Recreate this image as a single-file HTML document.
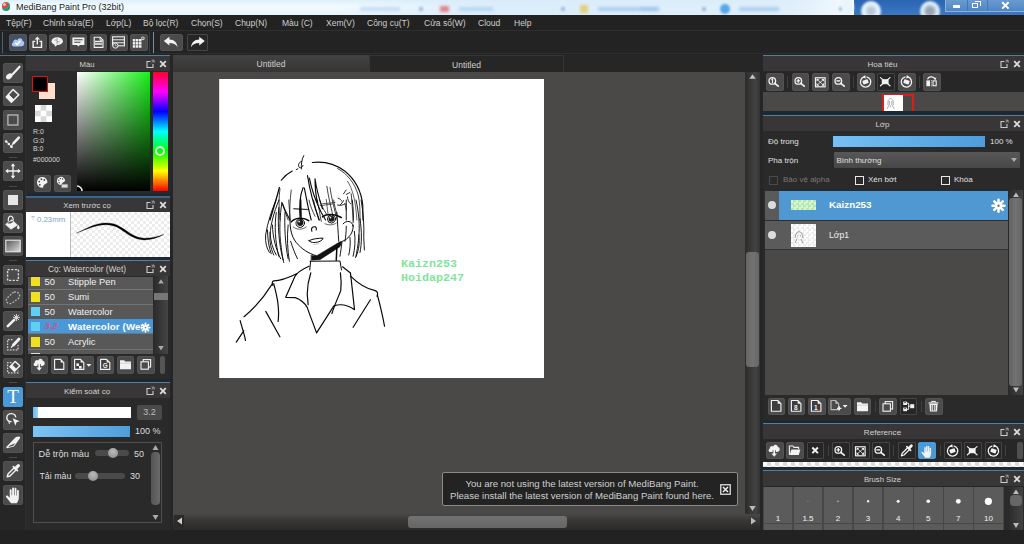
<!DOCTYPE html>
<html><head><meta charset="utf-8"><title>MediBang Paint Pro (32bit)</title>
<style>
*{box-sizing:border-box;margin:0;padding:0}
html,body{width:1024px;height:544px;overflow:hidden;background:#222222;font-family:"Liberation Sans","DejaVu Sans",sans-serif;font-size:9px;color:#d0d0d0}
body{position:relative}
.a{position:absolute}
.t{position:absolute;white-space:nowrap;line-height:12px}
#titlebar{left:0;top:0;width:1024px;height:14.6px;background:linear-gradient(#dff0fb,#f3fbff 45%,#e6f4fc);overflow:hidden}
#menubar{left:0;top:14.6px;width:1024px;height:16.4px;background:#222222;border-bottom:1px solid #2f2f2f}
#menubar span{position:absolute;top:2.6px;font-size:8.5px;line-height:12px;color:#cfcfcf;white-space:nowrap}
.btn{position:absolute;background:#4b4b4b;border:1px solid #535353;border-radius:2px}
.btnd{position:absolute;background:#262626;border:1px solid #454545;border-radius:1px}
.btn svg,.btnd svg,.btns svg{position:absolute;left:-1px;top:-1px}
.btns{position:absolute;background:#4a9ad8;border:1px solid #4a9ad8;border-radius:2px}
.pt{position:absolute;height:16px;background:#383636;border-top:1px solid #54809e;color:#d4d4d4;font-size:8px;line-height:17px;text-align:center;white-space:nowrap;padding-right:22px}
.pbg{position:absolute;background:#2a2a2a}
.sep{position:absolute;width:1px;background:#404040}
.chk{background-color:#fff;background-image:conic-gradient(#ececec 25%,transparent 0 50%,#ececec 0 75%,transparent 0);background-size:4px 4px}
</style></head><body>
<div id="titlebar" class="a">
<div class="a" style="left:330px;top:0;width:524px;height:15px;background:linear-gradient(to right,rgba(216,235,250,0),rgba(216,235,250,.85) 30%,rgba(220,237,250,.85) 88%,rgba(244,250,254,1))"></div>
<div class="a" style="left:360px;top:7px;width:40px;height:4px;background:#9cbfe6;filter:blur(1.4px);opacity:0.45"></div>
<div class="a" style="left:459px;top:7px;width:34px;height:4px;background:#9cc4ec;filter:blur(1.4px);opacity:0.55"></div>
<div class="a" style="left:598px;top:7px;width:60px;height:4px;background:#8fb8e8;filter:blur(1.4px);opacity:0.6"></div>
<div class="a" style="left:739px;top:7px;width:40px;height:4px;background:#8fb8e8;filter:blur(1.4px);opacity:0.6"></div>
<div class="a" style="left:640px;top:7px;width:20px;height:4px;background:#9cbfe6;filter:blur(1.4px);opacity:0.4"></div>
<div class="a" style="left:440px;top:6px;width:9px;height:6px;background:#e05a5a;filter:blur(1.6px);opacity:.7"></div>
<div class="a" style="left:580px;top:5px;width:8px;height:8px;background:#e8c860;filter:blur(1.6px);opacity:.8"></div>
<div class="a" style="left:720px;top:4px;width:10px;height:10px;border-radius:5px;background:#3f9be8;filter:blur(1.3px);opacity:.85"></div>
<div class="a" style="left:419px;top:7px;width:4px;height:4px;background:#7f9fc8;filter:blur(1.2px);opacity:.6"></div>
<div class="a" style="left:561px;top:7px;width:4px;height:4px;background:#7f9fc8;filter:blur(1.2px);opacity:.6"></div>
<div class="a" style="left:702px;top:7px;width:4px;height:4px;background:#7f9fc8;filter:blur(1.2px);opacity:.6"></div>
<div class="a" style="left:839px;top:7px;width:4px;height:4px;background:#7f9fc8;filter:blur(1.2px);opacity:.6"></div>
<div class="a" style="left:853.5px;top:0;width:171px;height:15px;background:linear-gradient(#2a64b2,#3b78c2)"></div>
<div class="a" style="left:945px;top:0;width:79px;height:11.5px;background:linear-gradient(#6c9ad0,#4f86c6);border-left:1px solid #8fb4dc;border-bottom:1px solid #8fb4dc"></div>
<div class="a" style="left:966.5px;top:0;width:1px;height:11px;background:#4477b6"></div><div class="a" style="left:987px;top:0;width:1px;height:11px;background:#4477b6"></div>
<div class="a" style="left:860.5px;top:0.5px;width:20px;height:20px;border-radius:10px;background:radial-gradient(circle,#b8c8d8 0 22%,#e4f2fb 45%);filter:blur(1.2px)"></div>
<div class="a" style="left:920px;top:0.5px;width:20px;height:20px;border-radius:10px;background:radial-gradient(circle,#98a4b0 0 25%,#dcecf8 50%);filter:blur(1.2px)"></div>
<div class="a" style="left:842px;top:-3px;width:12px;height:20px;border-radius:0 10px 10px 0;background:#e8f5fc;filter:blur(1px)"></div>
<div class="a" style="left:952.5px;top:5px;width:7.5px;height:2.6px;background:#fff;border-radius:0.5px"></div>
<div class="a" style="left:972px;top:2.5px;width:6px;height:5.5px;border:1.4px solid #fff"></div><div class="a" style="left:974.5px;top:0.8px;width:6px;height:5.5px;border:1.4px solid #fff;border-left:none;border-bottom:none"></div>
<svg class="a" style="left:1000.5px;top:0.5px" width="9" height="9"><path d="M1.2 1.2 L7.6 7.6 M7.6 1.2 L1.2 7.6" stroke="#fff" stroke-width="2"/></svg>
<div class="a" style="left:1.6px;top:2.2px;width:8.4px;height:8.4px;border-radius:5px;background:radial-gradient(circle at 30% 28%,#f0c8b8 0 12%,#e04848 22% 38%,#2aa47a 52%,#1c7c58 100%)"></div>
<div class="t" style="left:16px;top:1px;font-size:9px;color:#1a1a1a;text-shadow:0 0 2px #fff">MediBang Paint Pro (32bit)</div>
</div>
<div id="menubar" class="a">
<span style="left:6px">Tệp(F)</span>
<span style="left:43px">Chỉnh sửa(E)</span>
<span style="left:106px">Lớp(L)</span>
<span style="left:143px">Bộ lọc(R)</span>
<span style="left:191px">Chọn(S)</span>
<span style="left:235px">Chụp(N)</span>
<span style="left:282px">Màu (C)</span>
<span style="left:326px">Xem(V)</span>
<span style="left:367px">Công cụ(T)</span>
<span style="left:424px">Cửa sổ(W)</span>
<span style="left:478px">Cloud</span>
<span style="left:514px">Help</span>
</div>
<div class="a" style="left:0;top:31px;width:1024px;height:24px;background:#232323"></div>
<div class="a" style="left:0;top:53px;width:1024px;height:1px;background:#2e2e2e"></div>
<div class="a" style="left:2px;top:32px;width:1px;height:21px;background:#44607a"></div>
<div class="a" style="left:149px;top:32px;width:1px;height:21px;background:#3a3a3a"></div>
<div class="a" style="left:153px;top:32px;width:1px;height:21px;background:#7890a4"></div>
<div class="btn" style="left:9px;top:34px;width:17.5px;height:17px;background:#47505e;border-color:#4f5866"><svg width="17" height="17" viewBox="0 0 17 17"><path d="M5 12.4C2.4 12.4 2 9 4.2 8.4C4 5.8 7 4.6 8.4 6.2C9.4 3.4 13.6 3.8 13.6 7C15.8 7.2 15.8 11 13.8 12C12 12.6 7 12.4 5 12.4Z" fill="#a9c9f2"/><path d="M6.2 8.8L8 10.6L11.4 6.8" fill="none" stroke="#fff" stroke-width="1.5"/></svg></div>
<div class="btn" style="left:29px;top:34px;width:17.5px;height:17px"><svg width="17" height="17" viewBox="0 0 17 17"><path d="M6.2 7.4H4.1V13.4H12.5V7.4H10.4" fill="none" stroke="#f2f2f2" stroke-width="1.4"/><path d="M8.3 4.4V10.6" stroke="#f2f2f2" stroke-width="1.4"/><path d="M5.6 5.6L8.3 2.4L11 5.6Z" fill="#f2f2f2"/></svg></div>
<div class="btn" style="left:49px;top:34px;width:17.5px;height:17px"><svg width="17" height="17" viewBox="0 0 17 17"><ellipse cx="8.2" cy="7.2" rx="5.7" ry="3.9" fill="#f2f2f2"/><path d="M5.4 9.8L6 12.8L8.8 10.6Z" fill="#f2f2f2"/><path d="M8 4V10M5.2 6.2C6.4 5.6 7 6.4 8 6M8 7.8C9 7.4 10 8.2 11 7.6" fill="none" stroke="#777" stroke-width="0.6"/></svg></div>
<div class="btn" style="left:69.5px;top:34px;width:17.5px;height:17px"><svg width="17" height="17" viewBox="0 0 17 17"><path d="M2.4 3.4H14.4V11H9.8L8.4 12.6L7 11H2.4Z" fill="#f2f2f2"/><path d="M4.2 5.8H12.6M4.2 8.2H10.4" stroke="#444" stroke-width="1.1"/></svg></div>
<div class="btn" style="left:89.5px;top:34px;width:17.5px;height:17px"><svg width="17" height="17" viewBox="0 0 17 17"><path d="M4.2 3.2H10L13 6.2V13.4H4.2Z" fill="#484848" stroke="#f2f2f2" stroke-width="1.1" stroke-linejoin="round"/><path d="M10 3.2V6.2H13" fill="none" stroke="#f2f2f2" stroke-width="0.9"/><path d="M5 7.4H12.2M5 10H12.2" stroke="#f2f2f2" stroke-width="1.5"/></svg></div>
<div class="btn" style="left:110px;top:34px;width:17.5px;height:17px"><svg width="17" height="17" viewBox="0 0 17 17"><rect x="2.6" y="2.8" width="11.8" height="9" fill="none" stroke="#f2f2f2" stroke-width="1.1"/><path d="M2.6 5.8H14.4M2.6 8.8H14.4" stroke="#f2f2f2" stroke-width="1"/><circle cx="5.4" cy="11.6" r="2.6" fill="#4b4b4b" stroke="#f2f2f2" stroke-width="1"/><path d="M5.4 10.2V11.8H6.6" fill="none" stroke="#f2f2f2" stroke-width="0.8"/></svg></div>
<div class="btn" style="left:130px;top:34px;width:17.5px;height:17px"><svg width="17" height="17" viewBox="0 0 17 17"><rect x="2.8" y="5.0" width="2.5" height="2.5" fill="#f2f2f2"/><rect x="5.9" y="5.0" width="2.5" height="2.5" fill="#f2f2f2"/><rect x="9.0" y="5.0" width="2.5" height="2.5" fill="#f2f2f2"/><rect x="2.8" y="8.1" width="2.5" height="2.5" fill="#f2f2f2"/><rect x="5.9" y="8.1" width="2.5" height="2.5" fill="#f2f2f2"/><rect x="9.0" y="8.1" width="2.5" height="2.5" fill="#f2f2f2"/><rect x="2.8" y="11.2" width="2.5" height="2.5" fill="#f2f2f2"/><rect x="5.9" y="11.2" width="2.5" height="2.5" fill="#f2f2f2"/><rect x="9.0" y="11.2" width="2.5" height="2.5" fill="#f2f2f2"/><circle cx="12.9" cy="4.3" r="1.3" fill="none" stroke="#ccc" stroke-width="1.1"/></svg></div>
<div class="btn" style="left:160px;top:34px;width:23px;height:17px"><svg width="23" height="17" viewBox="0 0 23 17"><path d="M3.8 7L9.4 2.8V5.4C14.2 5.4 17.2 8.6 17.6 13.2C16 10.4 13.2 9 9.4 9V11.4Z" fill="#f2f2f2"/></svg></div>
<div class="btnd" style="left:187px;top:34px;width:21px;height:17px"><svg width="21" height="17" viewBox="0 0 21 17"><g transform="translate(21 0) scale(-1 1)"><path d="M3.2 7L8.8 2.8V5.4C13.6 5.4 16.6 8.6 17 13.2C15.4 10.4 12.6 9 8.8 9V11.4Z" fill="#f2f2f2"/></g></svg></div>
<div class="a" style="left:0;top:55px;width:26px;height:475px;background:#262626;border-top:1px solid #5a6f80;border-right:1px solid #2f2f2f"></div>
<div class="btn" style="left:3px;top:63px;width:20px;height:20px"><svg width="20" height="20" viewBox="0 0 20 20"><path d="M16.6 3.7L9.6 11.2" stroke="#f2f2f2" stroke-width="2.1" stroke-linecap="round"/><ellipse cx="6.2" cy="13.3" rx="3.6" ry="2.5" transform="rotate(-38 6.3 13.2)" fill="#f2f2f2"/></svg></div>
<div class="btn" style="left:3px;top:86px;width:20px;height:20px"><svg width="20" height="20" viewBox="0 0 20 20"><path d="M10.1 3.6L15.8 8.8L8.4 16.2L3.2 11Z" fill="none" stroke="#f2f2f2" stroke-width="1.5" stroke-linejoin="round"/><path d="M3.2 11L5.6 8.6L10.8 13.8L8.4 16.2Z" fill="#f2f2f2" stroke="#f2f2f2" stroke-width="1" stroke-linejoin="round"/></svg></div>
<div class="btn" style="left:3px;top:109.5px;width:20px;height:20px"><svg width="20" height="20" viewBox="0 0 20 20"><rect x="4.9" y="5" width="10" height="10" fill="none" stroke="#c8c8c8" stroke-width="1.15"/></svg></div>
<div class="btn" style="left:3px;top:133px;width:20px;height:20px"><svg width="20" height="20" viewBox="0 0 20 20"><path d="M3.2 8.4L5.8 11L8.4 13.6" stroke="#f2f2f2" stroke-width="0.9" fill="none"/><circle cx="3.2" cy="8.4" r="1.25" fill="#f2f2f2"/><circle cx="5.8" cy="11" r="1.25" fill="#f2f2f2"/><circle cx="8.5" cy="13.7" r="1.4" fill="#f2f2f2"/><path d="M15.8 4.6L10.6 10.2" stroke="#f2f2f2" stroke-width="2.5" stroke-linecap="round"/><path d="M9.8 11L9.2 11.7" stroke="#f2f2f2" stroke-width="1.2" stroke-linecap="round"/></svg></div>
<div class="btn" style="left:3px;top:161px;width:20px;height:20px"><svg width="20" height="20" viewBox="0 0 20 20"><path d="M10 3.8V16.2M3.8 10H16.2" stroke="#f2f2f2" stroke-width="1.3"/><path d="M10 2.2L12.2 5.2H7.8ZM10 17.8L12.2 14.8H7.8ZM2.2 10L5.2 7.8V12.2ZM17.8 10L14.8 7.8V12.2Z" fill="#f2f2f2"/></svg></div>
<div class="btn" style="left:3px;top:190px;width:20px;height:20px"><svg width="20" height="20" viewBox="0 0 20 20"><rect x="5" y="5" width="10" height="10" fill="#e6e6e6"/></svg></div>
<div class="btn" style="left:3px;top:213px;width:20px;height:20px"><svg width="20" height="20" viewBox="0 0 20 20"><path d="M2.6 11.4L8.8 6.8L14.4 12L8 16.2Z" fill="#f2f2f2" stroke="#f2f2f2" stroke-width="0.8" stroke-linejoin="round"/><path d="M4.6 10.4C6 8.6 8 7.8 10.4 8.4C9 10 6.8 10.8 4.6 10.4Z" fill="#4b4b4b"/><path d="M5.4 8.4C4.8 5.6 5.8 3.2 7.6 3.2C9.4 3.2 10.4 5 10.2 7.6" fill="none" stroke="#f2f2f2" stroke-width="1.2"/><path d="M15.2 11.8C16 13 16.6 14 16.6 14.8C16.6 15.6 16 16.2 15.3 16.2C14.6 16.2 14 15.6 14 14.8C14 14 14.6 13 15.2 11.8Z" fill="#f2f2f2"/></svg></div>
<div class="btn" style="left:3px;top:236.2px;width:20px;height:20px"><svg width="20" height="20" viewBox="0 0 20 20"><defs><linearGradient id="gg" x1="0" y1="0" x2="1" y2="1"><stop offset="0" stop-color="#555"/><stop offset="1" stop-color="#ddd"/></linearGradient></defs><rect x="2.8" y="4.2" width="14.4" height="11.6" fill="url(#gg)" stroke="#e8e8e8" stroke-width="1.1"/></svg></div>
<div class="btn" style="left:3px;top:265px;width:20px;height:20px"><svg width="20" height="20" viewBox="0 0 20 20"><rect x="4.6" y="4.6" width="10.8" height="10.8" fill="none" stroke="#d8d8d8" stroke-width="1.4" stroke-dasharray="2.2 1.4"/></svg></div>
<div class="btn" style="left:3px;top:288px;width:20px;height:20px"><svg width="20" height="20" viewBox="0 0 20 20"><path d="M11 4.2C13.8 3.4 16.6 5.2 16.6 7.8C16.6 10.6 13.4 11.6 11.6 13.2C9.8 14.8 7 16.4 4.8 15C2.6 13.6 3 10.4 5 9.2C7 8 8.2 5 11 4.2Z" fill="none" stroke="#b8b8b8" stroke-width="1.3" stroke-dasharray="1.8 1.4"/></svg></div>
<div class="btn" style="left:3px;top:311px;width:20px;height:20px"><svg width="20" height="20" viewBox="0 0 20 20"><path d="M4.8 15.2L11.2 8.8" stroke="#f2f2f2" stroke-width="2.6" stroke-linecap="round"/><path d="M13.4 3V10M10 6.4H16.8M10.8 3.8L16 9M16 3.8L11.6 8.4" stroke="#e4e4e4" stroke-width="0.95"/></svg></div>
<div class="btn" style="left:3px;top:335px;width:20px;height:20px"><svg width="20" height="20" viewBox="0 0 20 20"><path d="M9.5 4.6H4.6V14.8H15V10" fill="none" stroke="#cfcfcf" stroke-width="1.3" stroke-dasharray="1.7 1.2"/><path d="M16 4L10.4 10" stroke="#f2f2f2" stroke-width="2.9" stroke-linecap="round"/><path d="M9.4 11L8.4 12.2" stroke="#f2f2f2" stroke-width="1.3" stroke-linecap="round"/></svg></div>
<div class="btn" style="left:3px;top:358px;width:20px;height:20px"><svg width="20" height="20" viewBox="0 0 20 20"><path d="M8.5 4.6H4.6V14.8H15V12.4" fill="none" stroke="#cfcfcf" stroke-width="1.3" stroke-dasharray="1.7 1.2"/><path d="M12.2 3.4L16.8 7.8L11.4 13.2L7 8.8Z" fill="#4b4b4b" stroke="#f2f2f2" stroke-width="1.4" stroke-linejoin="round"/><path d="M7 8.8L9 6.8L13.4 11.2L11.4 13.2Z" fill="#f2f2f2" stroke="#f2f2f2" stroke-width="0.8" stroke-linejoin="round"/></svg></div>
<div class="btns" style="left:3px;top:386.5px;width:20px;height:20px"><svg width="20" height="20" viewBox="0 0 20 20"><text x="10" y="16.4" text-anchor="middle" font-family="Liberation Serif,serif" font-size="19" fill="#fff">T</text></svg></div>
<div class="btn" style="left:3px;top:409.5px;width:20px;height:20px"><svg width="20" height="20" viewBox="0 0 20 20"><path d="M8.6 11.6C5.4 11.8 3.6 9.6 3.8 7.4C4 5 6.2 3.4 8.8 3.6C11.2 3.8 12.8 5.4 12.6 7.4" fill="none" stroke="#f2f2f2" stroke-width="1.4"/><path d="M6.4 11C5.6 12 5.8 13.2 7 13.4" fill="none" stroke="#f2f2f2" stroke-width="1.1"/><path d="M9.6 8.2L16.8 11.2L13.6 12.2L12.4 15.8Z" fill="#f2f2f2"/></svg></div>
<div class="btn" style="left:3px;top:433px;width:20px;height:20px"><svg width="20" height="20" viewBox="0 0 20 20"><path d="M15.6 3.6C16.8 3.2 17.6 4.4 16.8 5.6L11 13.4L4 15.2L3 14.2L12.4 4.6C13.4 3.8 14.6 3.8 15.6 3.6Z" fill="#f2f2f2"/><path d="M5.2 14.2L10.4 12.8L12.2 10.2L6.8 12.4Z" fill="#555"/></svg></div>
<div class="btn" style="left:3px;top:461px;width:20px;height:20px"><svg width="20" height="20" viewBox="0 0 20 20"><path d="M11.2 6.8L5 13L4.2 15.8L7 15L13.2 8.8" fill="none" stroke="#f2f2f2" stroke-width="1.4" stroke-linejoin="round"/><path d="M10.4 5.6L14.4 9.6" stroke="#f2f2f2" stroke-width="1.8" stroke-linecap="round"/><path d="M12.6 7.4L15.4 4.6" stroke="#f2f2f2" stroke-width="3.2" stroke-linecap="round"/></svg></div>
<div class="btn" style="left:3px;top:485px;width:20px;height:20px"><svg width="20" height="20" viewBox="0 0 20 20"><path d="M6.2 11V5.4C6.2 4.2 7.9 4.2 7.9 5.4V10H8.4V3.8C8.4 2.6 10.1 2.6 10.1 3.8V10H10.6V4.2C10.6 3 12.3 3 12.3 4.2V10.2H12.8V6.2C12.8 5 14.5 5 14.5 6.2V11.6C14.5 14.6 13.4 16 12.6 17.4H7.4C6 15.6 4.4 13.6 3 11.8C2.2 10.8 3.4 9.8 4.4 10.6L6.2 12.4Z" fill="#f2f2f2" transform="translate(-0.1,-0.8) scale(1.1)"/></svg></div>
<div class="a" style="left:9px;top:157px;width:8px;height:1px;background:#4a4a4a"></div>
<div class="a" style="left:9px;top:185.5px;width:8px;height:1px;background:#4a4a4a"></div>
<div class="a" style="left:9px;top:260px;width:8px;height:1px;background:#4a4a4a"></div>
<div class="a" style="left:9px;top:382px;width:8px;height:1px;background:#4a4a4a"></div>
<div class="a" style="left:9px;top:457px;width:8px;height:1px;background:#4a4a4a"></div>
<div class="pbg" style="left:26px;top:55px;width:144px;height:475px;background:#262626"></div>
<div class="pbg" style="left:26px;top:71px;width:144px;height:122px"></div>
<div class="pt" style="left:26px;top:55px;width:144px;font-size:7.7px">Màu<svg class="a" style="right:15px;top:3px" width="9" height="9" viewBox="0 0 9 9"><path d="M4.5 2.5H1v6h6V5" fill="none" stroke="#ccc" stroke-width="1.1"/><path d="M5.5 1.2h2.6v2.6M8 1.3L5.6 3.7" fill="none" stroke="#aaa" stroke-width="0.9"/></svg><svg class="a" style="right:3px;top:4px" width="8" height="8" viewBox="0 0 8 8"><path d="M1.2 1.2L6.8 6.8M6.8 1.2L1.2 6.8" stroke="#ddd" stroke-width="1.8"/></svg></div>
<div class="a" style="left:39px;top:83px;width:16px;height:16px;background:#fde0cc"></div>
<div class="a" style="left:32px;top:76px;width:16px;height:16px;background:#000;border:1.3px solid #e01010"></div>
<div class="a" style="left:35px;top:104.5px;width:17px;height:17px;background-color:#fff;background-image:conic-gradient(#d8d8d8 25%,#fff 0 50%,#d8d8d8 0 75%,#fff 0);background-size:11.34px 11.34px"></div>
<div class="t" style="left:33px;top:126px;font-size:6.9px;color:#d8d8d8">R:0</div>
<div class="t" style="left:33px;top:135px;font-size:6.9px;color:#d8d8d8">G:0</div>
<div class="t" style="left:33px;top:143px;font-size:6.9px;color:#d8d8d8">B:0</div>
<div class="t" style="left:33px;top:154px;font-size:6.9px;color:#d8d8d8">#000000</div>
<div class="btn" style="left:34px;top:175px;width:17px;height:17px"><svg width="17" height="17" viewBox="0 0 17 17"><path d="M13.5 7.4A5.3 5.3 0 1 0 9.26 12.594000000000001C8.729999999999999 10.05 11.114999999999998 9.255 13.5 7.4Z" fill="#f2f2f2"/><circle cx="5.28" cy="6.61" r="0.90" fill="#444"/><circle cx="7.40" cy="4.22" r="0.90" fill="#444"/><circle cx="10.32" cy="5.02" r="0.90" fill="#444"/><circle cx="5.81" cy="9.79" r="0.90" fill="#444"/></svg></div>
<div class="btn" style="left:54px;top:175px;width:17px;height:17px"><svg width="17" height="17" viewBox="0 0 17 17"><path d="M11.1 5.9A4.1 4.1 0 1 0 7.82 9.918C7.41 7.95 9.254999999999999 7.335 11.1 5.9Z" fill="#f2f2f2"/><circle cx="4.75" cy="5.29" r="0.70" fill="#444"/><circle cx="6.38" cy="3.44" r="0.70" fill="#444"/><circle cx="8.64" cy="4.06" r="0.70" fill="#444"/><circle cx="5.16" cy="7.75" r="0.70" fill="#444"/><rect x="7.6" y="9.2" width="6.2" height="3.6" fill="#ddd" stroke="#888" stroke-width="0.6"/></svg></div>
<div class="a" style="left:77px;top:72px;width:73px;height:119px;background:linear-gradient(to bottom,rgba(0,0,0,0),#000),linear-gradient(to right,#fff,#18f018)"></div>
<div class="a" style="left:153px;top:72px;width:15px;height:119px;background:linear-gradient(to bottom,#ff0030 0%,#ff00ff 16.7%,#0000ff 33.3%,#00ffff 50%,#00ff00 66.7%,#ffff00 83.3%,#ff0000 100%)"></div>
<div class="a" style="left:155.2px;top:146px;width:9.8px;height:9.8px;border-radius:5px;border:2.1px solid #dcf6dc"></div>
<svg class="a" style="left:77px;top:181px" width="10" height="10"><circle cx="0" cy="10" r="5" fill="none" stroke="#f0f0f0" stroke-width="1.6"/></svg>
<div class="a" style="left:26px;top:192.5px;width:144px;height:3.5px;background:#1e2832"></div>
<div class="pt" style="left:26px;top:196px;width:144px;font-size:7.8px">Xem trước cọ<svg class="a" style="right:15px;top:3px" width="9" height="9" viewBox="0 0 9 9"><path d="M4.5 2.5H1v6h6V5" fill="none" stroke="#ccc" stroke-width="1.1"/><path d="M5.5 1.2h2.6v2.6M8 1.3L5.6 3.7" fill="none" stroke="#aaa" stroke-width="0.9"/></svg><svg class="a" style="right:3px;top:4px" width="8" height="8" viewBox="0 0 8 8"><path d="M1.2 1.2L6.8 6.8M6.8 1.2L1.2 6.8" stroke="#ddd" stroke-width="1.8"/></svg></div>
<div class="a" style="left:26px;top:196px;width:144px;height:2px;background:#3d6485"></div>
<div class="a" style="left:26px;top:212px;width:144px;height:44.5px;background:#fff"></div>
<div class="a chk" style="left:71px;top:212px;width:99px;height:44.5px;background-size:6px 6px"></div>
<div class="a" style="left:70px;top:212px;width:1px;height:45px;background:#bbb"></div>
<div class="t" style="left:31px;top:212px;font-size:5px;color:#7ba5c4">〒</div>
<div class="t" style="left:37px;top:213px;font-size:7.8px;margin-top:0.8px;color:#7ba5c4">0.23mm</div>
<svg class="a" style="left:70px;top:212px" width="100" height="45"><path d="M6.4 21.2C16 16.6 26 11 35.7 11C45 11 50.5 14.6 56.1 18.6C62.5 23.2 68 26.2 74.4 26.2C81 26.2 88 24.6 93.7 22.4C88 25.6 81 27.9 74.4 27.9C67.5 27.9 61.5 24.9 55.1 20.3C49.5 16.4 45 12.7 35.7 12.7C26 12.7 16 17.4 6.4 21.2Z" fill="#000" stroke="#000" stroke-width="0.3"/></svg>
<div class="a" style="left:26px;top:256.5px;width:144px;height:3.5px;background:#1e2832"></div>
<div class="pt" style="left:26px;top:260px;width:144px;font-size:8.4px">Cọ: Watercolor (Wet)<svg class="a" style="right:15px;top:3px" width="9" height="9" viewBox="0 0 9 9"><path d="M4.5 2.5H1v6h6V5" fill="none" stroke="#ccc" stroke-width="1.1"/><path d="M5.5 1.2h2.6v2.6M8 1.3L5.6 3.7" fill="none" stroke="#aaa" stroke-width="0.9"/></svg><svg class="a" style="right:3px;top:4px" width="8" height="8" viewBox="0 0 8 8"><path d="M1.2 1.2L6.8 6.8M6.8 1.2L1.2 6.8" stroke="#ddd" stroke-width="1.8"/></svg></div>
<div class="pbg" style="left:26px;top:276px;width:144px;height:104px"></div>
<div class="a" style="left:28px;top:276.5px;width:125px;height:77.5px;background:#585858;overflow:hidden">
<div class="a" style="left:0;top:12.0px;width:125px;height:1px;background:#747474"></div>
<div class="a" style="left:2.5px;top:0.45px;width:9.5px;height:9.3px;background:#f0e020"></div>
<div class="t" style="left:16.5px;top:-1.0px;font-size:9.3px;color:#f0f0f0">50</div>
<div class="t" style="left:40px;top:-1.0px;font-size:9.3px;color:#f0f0f0">Stipple Pen</div>
<div class="a" style="left:0;top:27.3px;width:125px;height:1px;background:#747474"></div>
<div class="a" style="left:2.5px;top:15.75px;width:9.5px;height:9.3px;background:#f0e020"></div>
<div class="t" style="left:16.5px;top:14.3px;font-size:9.3px;color:#f0f0f0">50</div>
<div class="t" style="left:40px;top:14.3px;font-size:9.3px;color:#f0f0f0">Sumi</div>
<div class="a" style="left:0;top:42.1px;width:125px;height:1px;background:#747474"></div>
<div class="a" style="left:2.5px;top:30.55px;width:9.5px;height:9.3px;background:#5fd0f4"></div>
<div class="t" style="left:16.5px;top:29.1px;font-size:9.3px;color:#f0f0f0">50</div>
<div class="t" style="left:40px;top:29.1px;font-size:9.3px;color:#f0f0f0">Watercolor</div>
<div class="a" style="left:0;top:42.6px;width:125px;height:14.8px;background:#4a98d8"></div>
<div class="a" style="left:0;top:56.9px;width:125px;height:1px;background:#747474"></div>
<div class="a" style="left:2.5px;top:45.35px;width:9.5px;height:9.3px;background:#5fd0f4"></div>
<div class="t" style="left:16.5px;top:43.9px;font-size:9.4px;font-weight:bold;font-style:italic;color:#d6507e">3.2</div>
<div class="t" style="left:40px;top:44.0px;font-size:9.7px;letter-spacing:0.15px;font-weight:bold;color:#fff;width:74px;overflow:hidden">Watercolor (Wet)</div>
<div class="a" style="left:0;top:72.5px;width:125px;height:1px;background:#747474"></div>
<div class="a" style="left:2.5px;top:60.95px;width:9.5px;height:9.3px;background:#f0e020"></div>
<div class="t" style="left:16.5px;top:59.5px;font-size:9.3px;color:#f0f0f0">50</div>
<div class="t" style="left:40px;top:59.5px;font-size:9.3px;color:#f0f0f0">Acrylic</div>
<div class="a" style="left:2.5px;top:76.3px;width:9.5px;height:1.7px;background:#e0e0e0"></div>
<svg class="a" style="left:110.2px;top:43px" width="15" height="15"><path d="M7.50 7.60L11.70 7.60" stroke="#fff" stroke-width="1.76" stroke-linecap="round"/><path d="M7.50 7.60L10.47 10.57" stroke="#fff" stroke-width="1.76" stroke-linecap="round"/><path d="M7.50 7.60L7.50 11.80" stroke="#fff" stroke-width="1.76" stroke-linecap="round"/><path d="M7.50 7.60L4.53 10.57" stroke="#fff" stroke-width="1.76" stroke-linecap="round"/><path d="M7.50 7.60L3.30 7.60" stroke="#fff" stroke-width="1.76" stroke-linecap="round"/><path d="M7.50 7.60L4.53 4.63" stroke="#fff" stroke-width="1.76" stroke-linecap="round"/><path d="M7.50 7.60L7.50 3.40" stroke="#fff" stroke-width="1.76" stroke-linecap="round"/><path d="M7.50 7.60L10.47 4.63" stroke="#fff" stroke-width="1.76" stroke-linecap="round"/><circle cx="7.5" cy="7.6" r="2.60" fill="#fff"/><circle cx="7.5" cy="7.6" r="0.84" fill="#4a98d8"/></svg>
</div>
<div class="a" style="left:154px;top:276px;width:14px;height:78px;background:linear-gradient(to right,#2c2c2c,#444)"></div>
<div class="a" style="left:154px;top:293px;width:14px;height:7px;background:#777"></div>
<svg class="a" style="left:154px;top:276px" width="14" height="78"><path d="M4.2 7.6h5.6l-2.8-4.4z" fill="#a8a8a8"/><path d="M4.2 70h5.6l-2.8 4.6z" fill="#a8a8a8"/></svg>
<div class="btn" style="left:31px;top:356px;width:17px;height:18px"><svg width="17" height="17" viewBox="0 0 17 17"><path d="M4.4 10C2.4 10 2 7.2 3.8 6.4C3.6 4.2 6 3.2 7.2 4.4C8 2 11.6 2.2 11.8 5C14 4.8 14.4 8.4 12.6 9.6C11 10.4 6 10 4.4 10Z" fill="#f2f2f2"/><path d="M8.2 8.2V12.4" stroke="#4b4b4b" stroke-width="3.2"/><path d="M8.2 8V12.4" stroke="#f2f2f2" stroke-width="1.7"/><path d="M5.4 11.6H11L8.2 14.8Z" fill="#f2f2f2"/></svg></div>
<div class="btn" style="left:51px;top:356px;width:17px;height:18px"><svg width="17" height="17" viewBox="0 0 17 17"><path d="M3.6 3.4H9.600000000000001L12.8 6.6V13.4H3.6Z" fill="#3e3e3e" stroke="#f2f2f2" stroke-width="1.15" stroke-linejoin="round"/><path d="M9.600000000000001 3.4V6.6H12.8Z" fill="#f2f2f2"/></svg></div>
<div class="btn" style="left:71px;top:356px;width:23px;height:18px"><svg width="23" height="17" viewBox="0 0 23 17"><path d="M3.6 3.4H9.600000000000001L12.8 6.6V13.4H3.6Z" fill="#3e3e3e" stroke="#f2f2f2" stroke-width="1.15" stroke-linejoin="round"/><path d="M9.600000000000001 3.4V6.6H12.8Z" fill="#f2f2f2"/><rect x="5.4" y="7.4" width="2.6" height="2.6" fill="#f2f2f2"/><rect x="8" y="10" width="2.6" height="2.6" fill="#f2f2f2"/><path d="M15.4 8H20.4L17.9 10.8Z" fill="#f2f2f2"/></svg></div>
<div class="btn" style="left:97px;top:356px;width:17px;height:18px"><svg width="17" height="17" viewBox="0 0 17 17"><path d="M3.6 3.4H9.600000000000001L12.8 6.6V13.4H3.6Z" fill="#3e3e3e" stroke="#f2f2f2" stroke-width="1.15" stroke-linejoin="round"/><path d="M9.600000000000001 3.4V6.6H12.8Z" fill="#f2f2f2"/><text x="8.2" y="12.4" text-anchor="middle" font-family="Liberation Sans,sans-serif" font-size="6.3" font-weight="bold" fill="#f2f2f2">G</text></svg></div>
<div class="btn" style="left:117px;top:356px;width:17px;height:18px"><svg width="17" height="17" viewBox="0 0 17 17"><path d="M3 4.2H7.2L8.2 5.6H14V13.2H3Z" fill="#f2f2f2"/><path d="M3 7.2H14" stroke="#bbb" stroke-width="0.6"/></svg></div>
<div class="btn" style="left:137px;top:356px;width:17.5px;height:18px"><svg width="17" height="17" viewBox="0 0 17 17"><rect x="6.2" y="3.6" width="7.4" height="7.4" fill="none" stroke="#f2f2f2" stroke-width="1.1"/><rect x="4" y="5.8" width="7.4" height="7.4" fill="#4b4b4b" stroke="#f2f2f2" stroke-width="1.1"/></svg></div>
<div class="a" style="left:160px;top:356px;width:5px;height:18px;background:#555;border-radius:2px"></div>
<div class="a" style="left:26px;top:378.5px;width:144px;height:3.5px;background:#1e2832"></div>
<div class="pt" style="left:26px;top:382px;width:144px;font-size:8px">Kiểm soát cọ<svg class="a" style="right:15px;top:3px" width="9" height="9" viewBox="0 0 9 9"><path d="M4.5 2.5H1v6h6V5" fill="none" stroke="#ccc" stroke-width="1.1"/><path d="M5.5 1.2h2.6v2.6M8 1.3L5.6 3.7" fill="none" stroke="#aaa" stroke-width="0.9"/></svg><svg class="a" style="right:3px;top:4px" width="8" height="8" viewBox="0 0 8 8"><path d="M1.2 1.2L6.8 6.8M6.8 1.2L1.2 6.8" stroke="#ddd" stroke-width="1.8"/></svg></div>
<div class="pbg" style="left:26px;top:398px;width:144px;height:132px"></div>
<div class="a" style="left:33px;top:407px;width:98px;height:11px;background:#fff"></div>
<div class="a" style="left:33px;top:407px;width:4.5px;height:11px;background:linear-gradient(to right,#6cb8ee,#9cd0f4)"></div>
<div class="a" style="left:137px;top:405px;width:25px;height:15px;background:#4a4a4a;border-radius:2px;color:#bbb;text-align:center;line-height:15px;font-size:9px">3.2</div>
<div class="a" style="left:33px;top:426px;width:97px;height:11px;background:linear-gradient(to right,#7cc4f4,#4e9edc)"></div>
<div class="t" style="left:135px;top:425px;font-size:9px;color:#ddd">100 %</div>
<div class="a" style="left:33px;top:442px;width:129px;height:81px;border:1px solid #505050"></div>
<div class="t" style="left:38.5px;top:447.5px;font-size:9.2px;color:#ddd">Dễ trộn màu</div>
<div class="a" style="left:95px;top:450px;width:34px;height:6px;border-radius:3px;background:#4a4a4a"></div>
<div class="a" style="left:107.5px;top:448px;width:10px;height:10px;border-radius:5px;background:radial-gradient(circle at 50% 35%,#bbb,#888)"></div>
<div class="t" style="left:134px;top:447.5px;font-size:9px;color:#ddd">50</div>
<div class="t" style="left:39.5px;top:470px;font-size:8.8px;color:#ddd">Tải màu</div>
<div class="a" style="left:75px;top:473px;width:50px;height:6px;border-radius:3px;background:#4a4a4a"></div>
<div class="a" style="left:88px;top:471px;width:10px;height:10px;border-radius:5px;background:radial-gradient(circle at 50% 35%,#bbb,#888)"></div>
<div class="t" style="left:130px;top:470px;font-size:9px;color:#ddd">30</div>
<div class="a" style="left:150px;top:443px;width:11px;height:79px;background:#2a2a2a"></div>
<div class="a" style="left:151px;top:452px;width:9px;height:53px;border-radius:4px;background:linear-gradient(to right,#555,#6a6a6a)"></div>
<svg class="a" style="left:150px;top:443px" width="11" height="79"><path d="M2.5 7h6l-3-5z" fill="#aaa"/><path d="M2.5 72h6l-3 5z" fill="#aaa"/></svg>
<div class="a" style="left:170px;top:55px;width:593px;height:475px;background:#262626"></div>
<div class="a" style="left:173px;top:55px;width:587px;height:17px;background:#262626"></div>
<div class="a" style="left:173px;top:55px;width:196px;height:17px;background:linear-gradient(#434242,#363535);color:#d0d0d0;font-size:8.5px;line-height:18.5px;text-align:center">Untitled</div>
<div class="a" style="left:369px;top:55px;width:195px;height:17px;background:#262626;border:1px solid #363636;border-bottom:none;color:#d0d0d0;font-size:8.5px;line-height:18px;text-align:center">Untitled</div>
<div class="a" style="left:173px;top:72px;width:572px;height:442px;background:#4b4948;overflow:hidden">
<div class="a" style="left:46px;top:7px;width:325px;height:299px;background:#fff;border-left:1px solid #ddd"></div>
<svg class="a" style="left:0;top:0" width="572" height="442" viewBox="0 0 572 442"><defs><clipPath id="ca"><rect x="0" y="0" width="572" height="150"/></clipPath></defs><g clip-path="url(#ca)"><g transform="translate(87,78) scale(0.12500)">
<g fill="none" stroke="#0a0a0a" stroke-width="9" stroke-linecap="round" stroke-linejoin="round">
<path d="M350 45 C336 70 328 110 331 152 M334 92 C314 92 302 118 312 136 C320 148 338 142 344 124 M303 150 L290 157" stroke-width="7.5"/>
<path d="M170 242 C195 210 225 185 258 168"/>
<path d="M418 100 C500 90 600 110 680 170 C760 235 810 330 822 440 L824 560"/>
<path d="M620 148 C700 190 760 270 785 360 C800 420 800 480 800 560" stroke-width="6"/>
<path d="M700 250 C740 310 765 400 775 560" stroke-width="5"/>
<path d="M155 300 C135 380 110 460 80 560" stroke-width="10"/>
<path d="M160 310 C150 380 150 460 160 560 M175 420 L225 560 M250 320 C240 400 235 470 240 560" stroke-width="6"/>
<path d="M345 300 C320 360 310 440 322 560 M355 305 C370 380 385 470 410 560"/>
<path d="M380 205 C395 300 420 420 475 560 M395 225 C410 300 440 400 490 500 L525 560 M440 230 C450 300 470 380 500 470 M440 230 C440 300 445 360 460 420"/>
<path d="M535 290 C545 370 570 470 592 560 M560 300 C570 370 590 460 618 560" stroke-width="6"/>
<path d="M270 470 L390 478 M480 445 L580 432 M530 395 L545 520" stroke-width="5"/>
<path d="M325 390 L330 560" stroke-width="9"/>
<path d="M625 385 C640 390 650 400 655 410 M640 440 C650 430 662 420 668 405 M668 350 C672 340 685 330 690 320 M690 355 C700 350 712 345 720 340 M700 375 C700 395 710 420 725 430 M680 430 C685 450 690 470 690 480 M620 440 C640 445 660 445 680 430" stroke-width="7"/>
<path d="M730 350 C735 420 740 480 745 560" stroke-width="6"/>
</g></g></g><g transform="translate(87,128) scale(0.12500)">
<g fill="none" stroke="#0a0a0a" stroke-width="9" stroke-linecap="round" stroke-linejoin="round">
<path d="M128 0 C95 80 60 180 45 280 C40 340 55 390 75 420 M152 0 C110 100 75 220 80 330 C85 380 100 420 110 440 M175 20 C160 120 150 250 170 380 C175 430 185 480 190 500 M150 60 C140 200 150 350 185 480 M100 200 C100 300 130 400 165 470 M225 200 C215 300 220 400 235 490 M245 330 C260 380 280 430 300 470 M60 240 C60 300 70 380 90 430 M200 100 C195 200 200 350 225 470 M130 100 C115 200 120 330 150 450 M80 260 C85 330 100 390 130 440" stroke-width="7.5"/>
<path d="M180 30 C200 90 225 130 240 160" stroke-width="9"/>
<path d="M240 160 C240 230 250 290 290 340 C330 390 390 430 450 445" stroke-width="8"/>
<path d="M410 442 L450 447 L642 332 L654 338 L640 374 L480 478 L410 482 Z" fill="#111" stroke-width="3"/>
<path d="M615 380 L610 482" stroke-width="12"/>
<path d="M400 490 L640 488 L652 560 M405 490 L398 560" stroke-width="8"/>
<path d="M665 190 C690 160 740 165 745 210 M745 200 C750 250 720 310 650 335" stroke-width="8"/>
<path d="M738 0 C745 60 750 120 745 180 M768 0 C790 100 800 200 790 300 C785 360 775 420 765 460 M809 0 C825 100 835 200 830 300 L835 400 M790 280 C800 340 790 400 770 450 M690 0 L690 160 M615 100 C620 180 625 260 630 330 M690 210 C690 260 685 300 680 330 M655 340 C650 380 645 420 640 450 M720 300 C725 350 720 400 710 440 M755 250 C765 320 760 390 745 450 M800 150 C815 250 815 350 800 420" stroke-width="7.5"/>
<path d="M250 175 C280 140 350 135 390 165" stroke-width="12"/>
<path d="M265 215 C290 240 340 240 370 215" stroke-width="5"/>
<circle cx="322" cy="185" r="34" stroke-width="8"/>
<circle cx="322" cy="182" r="25" fill="#1a1a1a" stroke="none"/><circle cx="313" cy="172" r="7" fill="#fff" stroke="none"/>
<path d="M500 135 C530 110 600 110 650 140" stroke-width="12"/>
<path d="M520 190 C550 205 590 200 610 185" stroke-width="5"/>
<circle cx="572" cy="152" r="32" stroke-width="8"/>
<circle cx="572" cy="150" r="23" fill="#1a1a1a" stroke="none"/><circle cx="564" cy="141" r="6.5" fill="#fff" stroke="none"/>
<path d="M415 250 C405 225 420 210 445 215 C450 220 452 230 450 240"/>
<path d="M392 325 C420 310 470 305 505 305 C500 325 470 340 430 340 C415 340 400 335 392 325 Z" stroke-width="8"/>
<path d="M430 355 L470 350" stroke-width="4" stroke="#888"/>
<path d="M392 0 C400 40 420 90 440 130 M428 0 C440 50 455 110 470 160 M477 0 C490 40 510 80 530 110 M230 0 C235 50 235 100 240 150 M589 0 C595 40 605 80 615 110 M458 0 C470 60 480 120 490 170" stroke-width="6"/>
<path d="M500 30 L600 20 M270 70 L385 75" stroke-width="5"/>
<path d="M325 0 L325 130" stroke-width="9"/>
</g></g><g transform="translate(46,148) scale(0.17647)">
<g fill="none" stroke="#0a0a0a" stroke-width="6.8" stroke-linecap="round" stroke-linejoin="round">
<path d="M520 300 C510 330 500 380 500 420 L505 480 M688 300 C692 330 695 360 690 400 C675 440 655 480 640 530"/>
<path d="M510 262 C470 280 440 300 430 320 L378 438 L432 440 C460 450 485 470 500 495 C515 540 535 590 553 640 L650 488 C690 472 730 482 768 508 L745 300 L700 265"/>
<path d="M440 305 C400 325 350 345 310 345 C300 348 300 360 305 370 M300 365 C260 430 200 500 142 548 M310 360 C325 420 345 490 335 575 M265 518 L345 662 M120 570 C130 610 145 650 150 682 M140 628 L98 692"/>
<path d="M745 318 C790 362 840 392 885 400 C900 405 902 420 895 432 M897 422 C912 480 928 545 938 602 M858 452 L760 608"/>
</g></g></svg>
<div class="t" style="left:228px;top:184.5px;font-family:'Liberation Mono',monospace;font-weight:bold;font-size:11.7px;line-height:14.5px;color:#7fe69c;white-space:pre">Kaizn253
Hoidap247</div>
<div class="a" style="left:269px;top:400px;width:296px;height:34px;background:#232323;border:1px solid #8a8a8a;border-radius:2px"></div>
<div class="t" style="left:269px;top:405.5px;width:280px;text-align:center;font-size:9.6px;line-height:12.3px;color:#d0d0d0;white-space:normal">You are not using the latest version of MediBang Paint.<br>Please install the latest version of MediBang Paint found here.</div>
<svg class="a" style="left:547px;top:412px" width="11" height="11"><rect x="0.75" y="0.75" width="9.5" height="9.5" fill="none" stroke="#ddd" stroke-width="1.3"/><path d="M3 3l5 5M8 3l-5 5" stroke="#eee" stroke-width="1.5"/></svg>
</div>
<div class="a" style="left:745px;top:72px;width:15px;height:442px;background:linear-gradient(to right,#2b2b2b,#424242 70%,#333)"></div>
<div class="a" style="left:745.5px;top:252px;width:13px;height:115px;border-radius:3px;background:linear-gradient(to right,#666,#727272 50%,#666)"></div>
<svg class="a" style="left:745px;top:72px" width="15" height="442"><path d="M4.3 6.8h6.4l-3.2-4.6z" fill="#c4c4c4"/><path d="M4.3 434h6.4l-3.2 5z" fill="#bbb"/></svg>
<div class="a" style="left:173px;top:514px;width:587px;height:14px;background:linear-gradient(#4a4847,#3a3938 40%,#2c2c2c)"></div>
<div class="a" style="left:174px;top:515px;width:10px;height:13px;background:#2a2a2a"></div>
<div class="a" style="left:408px;top:515.5px;width:159px;height:12px;border-radius:3px;background:linear-gradient(#727272,#666)"></div>
<svg class="a" style="left:173px;top:514px" width="587" height="14"><path d="M9 3.5v7l-5-3.5z" fill="#ccc"/><path d="M578 3.5v7l5-3.5z" fill="#bbb"/></svg>
<div class="a" style="left:173px;top:528px;width:587px;height:2px;background:#2c2c2c"></div>
<div class="a" style="left:763px;top:55px;width:261px;height:475px;background:#262626"></div>
<div class="pt" style="left:763px;top:55px;width:261px;font-size:8px">Hoa tiêu<svg class="a" style="right:15px;top:3px" width="9" height="9" viewBox="0 0 9 9"><path d="M4.5 2.5H1v6h6V5" fill="none" stroke="#ccc" stroke-width="1.1"/><path d="M5.5 1.2h2.6v2.6M8 1.3L5.6 3.7" fill="none" stroke="#aaa" stroke-width="0.9"/></svg><svg class="a" style="right:3px;top:4px" width="8" height="8" viewBox="0 0 8 8"><path d="M1.2 1.2L6.8 6.8M6.8 1.2L1.2 6.8" stroke="#ddd" stroke-width="1.8"/></svg></div>
<div class="a" style="left:763px;top:71px;width:261px;height:21px;background:#272727"></div>
<div class="btn" style="left:766px;top:73px;width:17.5px;height:18px"><svg width="17" height="17" viewBox="0 0 17 17"><circle cx="6.3" cy="7.9" r="3.3" fill="none" stroke="#f2f2f2" stroke-width="1.3"/><path d="M8.8 10.3L12.2 13.100000000000001" stroke="#f2f2f2" stroke-width="1.7" stroke-linecap="round"/><path d="M5.4 6.9L6.5 6V9.9" stroke="#f2f2f2" stroke-width="1.1" fill="none"/></svg></div>
<div class="btn" style="left:791.5px;top:73px;width:17.5px;height:18px"><svg width="17" height="17" viewBox="0 0 17 17"><circle cx="6.3" cy="7.9" r="3.3" fill="none" stroke="#f2f2f2" stroke-width="1.3"/><path d="M8.8 10.3L12.2 13.100000000000001" stroke="#f2f2f2" stroke-width="1.7" stroke-linecap="round"/><path d="M4.5 7.9H8.1M6.3 6.1V9.7" stroke="#f2f2f2" stroke-width="1.3"/></svg></div>
<div class="btn" style="left:811.5px;top:73px;width:17.5px;height:18px"><svg width="17" height="17" viewBox="0 0 17 17"><rect x="3.5" y="4.8" width="9.6" height="9" fill="none" stroke="#f2f2f2" stroke-width="1.2"/><path d="M4.6 5.9H7.2L4.6 8.5ZM12 5.9V8.5L9.4 5.9ZM4.6 12.7V10.1L7.2 12.7ZM12 12.7H9.4L12 10.1Z" fill="#f2f2f2"/><path d="M5.2 6.5L11.4 12.1M11.4 6.5L5.2 12.1" stroke="#f2f2f2" stroke-width="0.8"/></svg></div>
<div class="btn" style="left:832px;top:73px;width:17.5px;height:18px"><svg width="17" height="17" viewBox="0 0 17 17"><circle cx="6.3" cy="7.9" r="3.3" fill="none" stroke="#f2f2f2" stroke-width="1.3"/><path d="M8.8 10.3L12.2 13.100000000000001" stroke="#f2f2f2" stroke-width="1.7" stroke-linecap="round"/><path d="M4.4 7.9H8.2" stroke="#f2f2f2" stroke-width="1.4"/></svg></div>
<div class="btn" style="left:857px;top:73px;width:17.5px;height:18px"><svg width="17" height="17" viewBox="0 0 17 17"><path d="M7.2 3.9A5.2 5.2 0 1 0 9.6 3.8" fill="none" stroke="#f2f2f2" stroke-width="1.3"/><path d="M8.2 2L5.4 4.6L8.8 5.6Z" fill="#f2f2f2"/><rect x="5.7" y="6.9" width="5.6" height="4" rx="0.6" transform="rotate(-18 8.5 8.9)" fill="#f2f2f2"/></svg></div>
<div class="btnd" style="left:877px;top:73px;width:17.5px;height:18px"><svg width="17" height="17" viewBox="0 0 17 17"><path d="M3.4 4.6L13 12.8M13 4.6L3.4 12.8" stroke="#f2f2f2" stroke-width="1.2" stroke-linecap="round"/><rect x="4.8" y="6.2" width="6.8" height="5" fill="#f2f2f2"/></svg></div>
<div class="btn" style="left:898px;top:73px;width:17.5px;height:18px"><svg width="17" height="17" viewBox="0 0 17 17"><g transform="translate(17 0) scale(-1 1)"><path d="M7.2 3.9A5.2 5.2 0 1 0 9.6 3.8" fill="none" stroke="#f2f2f2" stroke-width="1.3"/><path d="M8.2 2L5.4 4.6L8.8 5.6Z" fill="#f2f2f2"/><rect x="5.7" y="6.9" width="5.6" height="4" rx="0.6" transform="rotate(-18 8.5 8.9)" fill="#f2f2f2"/></g></svg></div>
<div class="btn" style="left:923px;top:73px;width:17.5px;height:18px"><svg width="17" height="17" viewBox="0 0 17 17"><rect x="3.4" y="7.4" width="3.6" height="5.8" fill="#f2f2f2"/><rect x="10" y="7.9" width="3.2" height="4.8" fill="none" stroke="#f2f2f2" stroke-width="1.1"/><path d="M8.4 7V13.4" stroke="#f2f2f2" stroke-width="0.7" stroke-dasharray="1 0.8"/><path d="M4.6 6.4C5.2 3.4 11 2.8 12 6" fill="none" stroke="#f2f2f2" stroke-width="1.1"/><path d="M13.4 4.6L12.4 7.2L10.4 5.4Z" fill="#f2f2f2"/></svg></div>
<div class="sep" style="left:787px;top:76px;height:12px"></div>
<div class="sep" style="left:853px;top:76px;height:12px"></div>
<div class="sep" style="left:919px;top:76px;height:12px"></div>
<div class="a" style="left:763px;top:92px;width:261px;height:19px;background:#4b4948;overflow:hidden">
<div class="a" style="left:119.3px;top:1.9px;width:31.6px;height:30px;border:2px solid #de1c1c"></div>
<div class="a" style="left:121.2px;top:3.4px;width:18.4px;height:18px;background:#fff"></div>
<svg class="a" style="left:121px;top:3.5px" width="19" height="16"><path d="M4.6 3.6c1-1.4 3-1.4 4 0M4.2 4l-.4 5M9 4l.4 5M5.4 5v4M7.8 5v4M5 9l-2 4M8 9l2.4 4M6.4 9.4v2" stroke="#9a9aa2" stroke-width="0.8" fill="none"/></svg>
</div>
<div class="a" style="left:763px;top:111.5px;width:261px;height:3.5px;background:#1e2832"></div>
<div class="pt" style="left:763px;top:115px;width:261px;font-size:8px">Lớp<svg class="a" style="right:15px;top:3px" width="9" height="9" viewBox="0 0 9 9"><path d="M4.5 2.5H1v6h6V5" fill="none" stroke="#ccc" stroke-width="1.1"/><path d="M5.5 1.2h2.6v2.6M8 1.3L5.6 3.7" fill="none" stroke="#aaa" stroke-width="0.9"/></svg><svg class="a" style="right:3px;top:4px" width="8" height="8" viewBox="0 0 8 8"><path d="M1.2 1.2L6.8 6.8M6.8 1.2L1.2 6.8" stroke="#ddd" stroke-width="1.8"/></svg></div>
<div class="pbg" style="left:763px;top:131px;width:261px;height:290px"></div>
<div class="t" style="left:768px;top:136px;font-size:8px;color:#e0e0e0">Độ trong</div>
<div class="a" style="left:833px;top:136px;width:152px;height:11px;background:linear-gradient(to right,#76c0f4,#4e9cdc)"></div>
<div class="t" style="left:990px;top:136px;font-size:8px;color:#e0e0e0">100 %</div>
<div class="t" style="left:768px;top:154.5px;font-size:8px;color:#e0e0e0">Pha trộn</div>
<div class="a" style="left:834px;top:152px;width:186px;height:16px;background:linear-gradient(#585858,#474747);border-radius:1px"></div>
<div class="t" style="left:836.5px;top:154.5px;font-size:8px;color:#e0e0e0">Bình thường</div>
<svg class="a" style="left:1010px;top:157px" width="8" height="6"><path d="M1 1h6l-3 4z" fill="#aaa"/></svg>
<div class="a" style="left:769px;top:176px;width:9px;height:9px;border:1px solid #4a4a4a"></div>
<div class="t" style="left:783px;top:174px;font-size:8px;color:#777">Bảo vệ alpha</div>
<div class="a" style="left:855px;top:176px;width:9px;height:9px;border:1.3px solid #e8e8e8"></div>
<div class="t" style="left:868px;top:174px;font-size:8px;color:#e0e0e0">Xén bớt</div>
<div class="a" style="left:941px;top:176px;width:9px;height:9px;border:1.3px solid #e8e8e8"></div>
<div class="t" style="left:954px;top:174px;font-size:8px;color:#e0e0e0">Khóa</div>
<div class="a" style="left:765px;top:190px;width:243px;height:205px;background:#4b4948;border-top:1px solid #2a2a2a"></div>
<div class="a" style="left:765px;top:191px;width:243px;height:29px;background:#5a5a5a"></div>
<div class="a" style="left:779px;top:191px;width:229px;height:29px;background:#5098d2"></div>
<div class="a" style="left:765px;top:220px;width:243px;height:1px;background:#2e2e2e"></div>
<div class="a" style="left:765px;top:221px;width:243px;height:28px;background:#5b5b5b"></div>
<div class="a" style="left:765px;top:249px;width:243px;height:1px;background:#333"></div>
<div class="a" style="left:768px;top:201px;width:8px;height:8px;border-radius:4px;background:#dcdcdc"></div>
<div class="a" style="left:768px;top:231px;width:8px;height:8px;border-radius:4px;background:#dcdcdc"></div>
<div class="a chk" style="left:791px;top:200px;width:25px;height:10px;background-color:#d8f6d4;background-image:conic-gradient(#b4e8b0 25%,transparent 0 50%,#b4e8b0 0 75%,transparent 0);background-size:5px 5px"></div>
<div class="t" style="left:829px;top:198.8px;font-size:9.8px;font-weight:bold;color:#fff">Kaizn253</div>
<div class="a chk" style="left:791px;top:223.5px;width:25px;height:23.5px;background-size:5px 5px"></div>
<svg class="a" style="left:791px;top:223.5px" width="25" height="24"><path d="M5 10c1-3 5-3 6 0M5 10l-1 4M11 10l1 4M6 12h1M9 12h1M6 15l-2 4M10 15l2 4" stroke="#555" stroke-width="0.6" fill="none"/></svg>
<div class="t" style="left:829px;top:229px;font-size:8.6px;color:#f0f0f0">Lớp1</div>
<svg class="a" style="left:991px;top:198px" width="15" height="15"><path d="M7.50 7.70L13.50 7.70" stroke="#fff" stroke-width="2.52" stroke-linecap="round"/><path d="M7.50 7.70L11.74 11.94" stroke="#fff" stroke-width="2.52" stroke-linecap="round"/><path d="M7.50 7.70L7.50 13.70" stroke="#fff" stroke-width="2.52" stroke-linecap="round"/><path d="M7.50 7.70L3.26 11.94" stroke="#fff" stroke-width="2.52" stroke-linecap="round"/><path d="M7.50 7.70L1.50 7.70" stroke="#fff" stroke-width="2.52" stroke-linecap="round"/><path d="M7.50 7.70L3.26 3.46" stroke="#fff" stroke-width="2.52" stroke-linecap="round"/><path d="M7.50 7.70L7.50 1.70" stroke="#fff" stroke-width="2.52" stroke-linecap="round"/><path d="M7.50 7.70L11.74 3.46" stroke="#fff" stroke-width="2.52" stroke-linecap="round"/><circle cx="7.5" cy="7.7" r="3.72" fill="#fff"/><circle cx="7.5" cy="7.7" r="1.20" fill="#777"/></svg>
<div class="a" style="left:1009px;top:190px;width:14px;height:205px;background:linear-gradient(to right,#2c2c2c,#424242)"></div>
<div class="a" style="left:1009px;top:198px;width:13px;height:188px;border-radius:3px;background:linear-gradient(to right,#636363,#727272 50%,#666)"></div>
<svg class="a" style="left:1009px;top:190px" width="14" height="205"><path d="M4 7h6l-3-4.5z" fill="#bbb"/><path d="M4 197.5h6l-3 5z" fill="#bbb"/></svg>
<div class="btn" style="left:767.5px;top:397.5px;width:17.5px;height:17.5px"><svg width="17" height="17" viewBox="0 0 17 17"><path d="M3.4 2.5H9.7L12.9 5.7V13.2H3.4Z" fill="#3e3e3e" stroke="#f2f2f2" stroke-width="1.15" stroke-linejoin="round"/><path d="M9.7 2.5V5.7H12.9Z" fill="#f2f2f2"/></svg></div>
<div class="btn" style="left:787.5px;top:397.5px;width:17.5px;height:17.5px"><svg width="17" height="17" viewBox="0 0 17 17"><path d="M3.4 2.5H9.7L12.9 5.7V13.2H3.4Z" fill="#3e3e3e" stroke="#f2f2f2" stroke-width="1.15" stroke-linejoin="round"/><path d="M9.7 2.5V5.7H12.9Z" fill="#f2f2f2"/><text x="7.9" y="12" text-anchor="middle" font-family="Liberation Sans,sans-serif" font-size="6.5" font-weight="bold" fill="#f2f2f2">8</text></svg></div>
<div class="btn" style="left:808px;top:397.5px;width:17.5px;height:17.5px"><svg width="17" height="17" viewBox="0 0 17 17"><path d="M3.4 2.5H9.7L12.9 5.7V13.2H3.4Z" fill="#3e3e3e" stroke="#f2f2f2" stroke-width="1.15" stroke-linejoin="round"/><path d="M9.7 2.5V5.7H12.9Z" fill="#f2f2f2"/><text x="7.9" y="12" text-anchor="middle" font-family="Liberation Sans,sans-serif" font-size="6.5" font-weight="bold" fill="#f2f2f2">1</text></svg></div>
<div class="btn" style="left:828px;top:397.5px;width:22.5px;height:17.5px"><svg width="23" height="17" viewBox="0 0 23 17"><path d="M3 2.5H7.3999999999999995L10.6 5.7V11.6H3Z" fill="#4b4b4b" stroke="#b8b8b8" stroke-width="1.15" stroke-linejoin="round"/><path d="M7.3999999999999995 2.5V5.7H10.6Z" fill="#b8b8b8"/><path d="M9 10.4H13.4M11.2 8.2V12.6" stroke="#f2f2f2" stroke-width="1.4"/><path d="M14.6 7H19.6L17.1 9.8Z" fill="#f2f2f2"/></svg></div>
<div class="btn" style="left:853.5px;top:397.5px;width:17.5px;height:17.5px"><svg width="17" height="17" viewBox="0 0 17 17"><path d="M3 4.2H7.2L8.2 5.6H14V13.2H3Z" fill="#f2f2f2"/><path d="M3 7.2H14" stroke="#bbb" stroke-width="0.6"/></svg></div>
<div class="btn" style="left:879px;top:397.5px;width:17.5px;height:17.5px"><svg width="17" height="17" viewBox="0 0 17 17"><rect x="6.2" y="3.6" width="7.4" height="7.4" fill="none" stroke="#f2f2f2" stroke-width="1.1"/><rect x="4" y="5.8" width="7.4" height="7.4" fill="#4b4b4b" stroke="#f2f2f2" stroke-width="1.1"/></svg></div>
<div class="btnd" style="left:899.5px;top:397.5px;width:17.5px;height:17.5px"><svg width="17" height="17" viewBox="0 0 17 17"><rect x="3.2" y="3.6" width="3.8" height="3.4" fill="#f2f2f2"/><rect x="3.2" y="9.6" width="3.8" height="3.6" fill="#f2f2f2"/><rect x="10.2" y="6.2" width="4" height="4" fill="#f2f2f2"/><path d="M7 5.2H8.6V11.4H7M8.6 8.2H10.2" fill="none" stroke="#f2f2f2" stroke-width="0.9"/><path d="M4.2 4.6H6M4.2 10.6H6" stroke="#333" stroke-width="0.8"/></svg></div>
<div class="btn" style="left:925px;top:397.5px;width:17.5px;height:17.5px"><svg width="17" height="17" viewBox="0 0 17 17"><path d="M3.6 5H13.4" stroke="#f2f2f2" stroke-width="1.2"/><path d="M6.6 4.6V3.4H10.4V4.6" fill="none" stroke="#f2f2f2" stroke-width="1"/><path d="M4.4 6H12.6L12 13.6H5Z" fill="#f2f2f2"/><path d="M6.8 7V12.6M8.5 7V12.6M10.2 7V12.6" stroke="#555" stroke-width="0.9"/></svg></div>
<div class="sep" style="left:875px;top:401px;height:11px"></div>
<div class="sep" style="left:921px;top:401px;height:11px"></div>
<div class="a" style="left:763px;top:419.5px;width:261px;height:3.5px;background:#1e2832"></div>
<div class="pt" style="left:763px;top:423px;width:261px;font-size:8.1px">Reference<svg class="a" style="right:15px;top:3px" width="9" height="9" viewBox="0 0 9 9"><path d="M4.5 2.5H1v6h6V5" fill="none" stroke="#ccc" stroke-width="1.1"/><path d="M5.5 1.2h2.6v2.6M8 1.3L5.6 3.7" fill="none" stroke="#aaa" stroke-width="0.9"/></svg><svg class="a" style="right:3px;top:4px" width="8" height="8" viewBox="0 0 8 8"><path d="M1.2 1.2L6.8 6.8M6.8 1.2L1.2 6.8" stroke="#ddd" stroke-width="1.8"/></svg></div>
<div class="a" style="left:763px;top:439px;width:261px;height:23px;background:#272727"></div>
<div class="btn" style="left:766px;top:441.5px;width:17.5px;height:17.5px"><svg width="17" height="17" viewBox="0 0 17 17"><path d="M4.4 10C2.4 10 2 7.2 3.8 6.4C3.6 4.2 6 3.2 7.2 4.4C8 2 11.6 2.2 11.8 5C14 4.8 14.4 8.4 12.6 9.6C11 10.4 6 10 4.4 10Z" fill="#f2f2f2"/><path d="M8.2 8.2V12.4" stroke="#4b4b4b" stroke-width="3.2"/><path d="M8.2 8V12.4" stroke="#f2f2f2" stroke-width="1.7"/><path d="M5.4 11.6H11L8.2 14.8Z" fill="#f2f2f2"/></svg></div>
<div class="btn" style="left:786px;top:441.5px;width:17.5px;height:17.5px"><svg width="17" height="17" viewBox="0 0 17 17"><path d="M3.4 12.8V4H7L8 5.4H12.6V7" fill="none" stroke="#f2f2f2" stroke-width="1.1" stroke-linejoin="round"/><path d="M5.4 7.4H14.4L12.8 13H3.6Z" fill="#f2f2f2"/></svg></div>
<div class="btnd" style="left:806.5px;top:441.5px;width:17.5px;height:17.5px"><svg width="17" height="17" viewBox="0 0 17 17"><path d="M5.3 5.5L10.9 11.1M10.9 5.5L5.3 11.1" stroke="#f2f2f2" stroke-width="2"/></svg></div>
<div class="btnd" style="left:832px;top:441.5px;width:17.5px;height:17.5px"><svg width="17" height="17" viewBox="0 0 17 17"><circle cx="6.3" cy="7.9" r="3.3" fill="none" stroke="#f2f2f2" stroke-width="1.3"/><path d="M8.8 10.3L12.2 13.100000000000001" stroke="#f2f2f2" stroke-width="1.7" stroke-linecap="round"/><path d="M4.5 7.9H8.1M6.3 6.1V9.7" stroke="#f2f2f2" stroke-width="1.3"/></svg></div>
<div class="btnd" style="left:852px;top:441.5px;width:17.5px;height:17.5px"><svg width="17" height="17" viewBox="0 0 17 17"><rect x="3.5" y="4.8" width="9.6" height="9" fill="none" stroke="#f2f2f2" stroke-width="1.2"/><path d="M4.6 5.9H7.2L4.6 8.5ZM12 5.9V8.5L9.4 5.9ZM4.6 12.7V10.1L7.2 12.7ZM12 12.7H9.4L12 10.1Z" fill="#f2f2f2"/><path d="M5.2 6.5L11.4 12.1M11.4 6.5L5.2 12.1" stroke="#f2f2f2" stroke-width="0.8"/></svg></div>
<div class="btnd" style="left:872px;top:441.5px;width:17.5px;height:17.5px"><svg width="17" height="17" viewBox="0 0 17 17"><circle cx="6.3" cy="7.9" r="3.3" fill="none" stroke="#f2f2f2" stroke-width="1.3"/><path d="M8.8 10.3L12.2 13.100000000000001" stroke="#f2f2f2" stroke-width="1.7" stroke-linecap="round"/><path d="M4.4 7.9H8.2" stroke="#f2f2f2" stroke-width="1.4"/></svg></div>
<div class="btnd" style="left:898px;top:441.5px;width:17.5px;height:17.5px"><svg width="17" height="17" viewBox="0 0 17 17"><path d="M9.6 5.8L4.2 11.2L3.4 13.8L6 13L11.4 7.6" fill="none" stroke="#f2f2f2" stroke-width="1.3" stroke-linejoin="round"/><path d="M8.8 4.6L12.6 8.4" stroke="#f2f2f2" stroke-width="1.6" stroke-linecap="round"/><path d="M11 6.2L13.4 3.8" stroke="#f2f2f2" stroke-width="2.8" stroke-linecap="round"/></svg></div>
<div class="btns" style="left:918px;top:441.5px;width:17.5px;height:17.5px"><svg width="17" height="17" viewBox="0 0 17 17"><path d="M6.2 11V5.4C6.2 4.2 7.9 4.2 7.9 5.4V10H8.4V3.8C8.4 2.6 10.1 2.6 10.1 3.8V10H10.6V4.2C10.6 3 12.3 3 12.3 4.2V10.2H12.8V6.2C12.8 5 14.5 5 14.5 6.2V11.6C14.5 14.6 13.4 16 12.6 17.4H7.4C6 15.6 4.4 13.6 3 11.8C2.2 10.8 3.4 9.8 4.4 10.6L6.2 12.4Z" fill="#f2f2f2" transform="translate(1.2,1.4) scale(0.82)"/></svg></div>
<div class="btnd" style="left:944px;top:441.5px;width:17.5px;height:17.5px"><svg width="17" height="17" viewBox="0 0 17 17"><path d="M7.2 3.9A5.2 5.2 0 1 0 9.6 3.8" fill="none" stroke="#f2f2f2" stroke-width="1.3"/><path d="M8.2 2L5.4 4.6L8.8 5.6Z" fill="#f2f2f2"/><rect x="5.7" y="6.9" width="5.6" height="4" rx="0.6" transform="rotate(-18 8.5 8.9)" fill="#f2f2f2"/></svg></div>
<div class="btnd" style="left:964px;top:441.5px;width:17.5px;height:17.5px"><svg width="17" height="17" viewBox="0 0 17 17"><path d="M3.4 4.6L13 12.8M13 4.6L3.4 12.8" stroke="#f2f2f2" stroke-width="1.2" stroke-linecap="round"/><rect x="4.8" y="6.2" width="6.8" height="5" fill="#f2f2f2"/></svg></div>
<div class="btnd" style="left:984.5px;top:441.5px;width:17.5px;height:17.5px"><svg width="17" height="17" viewBox="0 0 17 17"><g transform="translate(17 0) scale(-1 1)"><path d="M7.2 3.9A5.2 5.2 0 1 0 9.6 3.8" fill="none" stroke="#f2f2f2" stroke-width="1.3"/><path d="M8.2 2L5.4 4.6L8.8 5.6Z" fill="#f2f2f2"/><rect x="5.7" y="6.9" width="5.6" height="4" rx="0.6" transform="rotate(-18 8.5 8.9)" fill="#f2f2f2"/></g></svg></div>
<div class="sep" style="left:827.5px;top:445px;height:11px"></div>
<div class="sep" style="left:893px;top:445px;height:11px"></div>
<div class="sep" style="left:939.5px;top:445px;height:11px"></div>
<div class="sep" style="left:1005px;top:445px;height:11px"></div>
<div class="a" style="left:1017px;top:442px;width:5.5px;height:17px;background:#505050;border-radius:2px"></div>
<div class="a chk" style="left:763px;top:462px;width:261px;height:5px;background-size:8px 8px;background-image:conic-gradient(#dcdcdc 25%,transparent 0 50%,#dcdcdc 0 75%,transparent 0)"></div>
<div class="a" style="left:763px;top:466.5px;width:261px;height:3.5px;background:#1e2832"></div>
<div class="pt" style="left:763px;top:470px;width:261px;font-size:7.7px">Brush Size<svg class="a" style="right:15px;top:3px" width="9" height="9" viewBox="0 0 9 9"><path d="M4.5 2.5H1v6h6V5" fill="none" stroke="#ccc" stroke-width="1.1"/><path d="M5.5 1.2h2.6v2.6M8 1.3L5.6 3.7" fill="none" stroke="#aaa" stroke-width="0.9"/></svg><svg class="a" style="right:3px;top:4px" width="8" height="8" viewBox="0 0 8 8"><path d="M1.2 1.2L6.8 6.8M6.8 1.2L1.2 6.8" stroke="#ddd" stroke-width="1.8"/></svg></div>
<div class="a" style="left:763px;top:487px;width:261px;height:43px;background:#2a2a2a"></div>
<div class="a" style="left:763px;top:487px;width:241px;height:43px;background:#474747"></div>
<div class="a" style="left:763.5px;top:487px;width:28.8px;height:36.1px;background:#5b5b5b"></div>
<div class="a" style="left:763.5px;top:524.3px;width:28.8px;height:5.7px;background:#5b5b5b"></div>
<div class="t" style="left:763.5px;top:513.3px;width:28.8px;text-align:center;font-size:8px;color:#f4f4f4">1</div>
<div class="a" style="left:793.6px;top:487px;width:28.8px;height:36.1px;background:#5b5b5b"></div>
<div class="a" style="left:793.6px;top:524.3px;width:28.8px;height:5.7px;background:#5b5b5b"></div>
<div class="t" style="left:793.6px;top:513.3px;width:28.8px;text-align:center;font-size:8px;color:#f4f4f4">1.5</div>
<div class="a" style="left:823.6px;top:487px;width:28.8px;height:36.1px;background:#5b5b5b"></div>
<div class="a" style="left:823.6px;top:524.3px;width:28.8px;height:5.7px;background:#5b5b5b"></div>
<div class="t" style="left:823.6px;top:513.3px;width:28.8px;text-align:center;font-size:8px;color:#f4f4f4">2</div>
<div class="a" style="left:853.7px;top:487px;width:28.8px;height:36.1px;background:#5b5b5b"></div>
<div class="a" style="left:853.7px;top:524.3px;width:28.8px;height:5.7px;background:#5b5b5b"></div>
<div class="t" style="left:853.7px;top:513.3px;width:28.8px;text-align:center;font-size:8px;color:#f4f4f4">3</div>
<div class="a" style="left:883.8px;top:487px;width:28.8px;height:36.1px;background:#5b5b5b"></div>
<div class="a" style="left:883.8px;top:524.3px;width:28.8px;height:5.7px;background:#5b5b5b"></div>
<div class="t" style="left:883.8px;top:513.3px;width:28.8px;text-align:center;font-size:8px;color:#f4f4f4">4</div>
<div class="a" style="left:913.9px;top:487px;width:28.8px;height:36.1px;background:#5b5b5b"></div>
<div class="a" style="left:913.9px;top:524.3px;width:28.8px;height:5.7px;background:#5b5b5b"></div>
<div class="t" style="left:913.9px;top:513.3px;width:28.8px;text-align:center;font-size:8px;color:#f4f4f4">5</div>
<div class="a" style="left:943.9px;top:487px;width:28.8px;height:36.1px;background:#5b5b5b"></div>
<div class="a" style="left:943.9px;top:524.3px;width:28.8px;height:5.7px;background:#5b5b5b"></div>
<div class="t" style="left:943.9px;top:513.3px;width:28.8px;text-align:center;font-size:8px;color:#f4f4f4">7</div>
<div class="a" style="left:974.0px;top:487px;width:28.8px;height:36.1px;background:#5b5b5b"></div>
<div class="a" style="left:974.0px;top:524.3px;width:28.8px;height:5.7px;background:#5b5b5b"></div>
<div class="t" style="left:974.0px;top:513.3px;width:28.8px;text-align:center;font-size:8px;color:#f4f4f4">10</div>
<svg class="a" style="left:763px;top:487px" width="245" height="30"><circle cx="14.90" cy="14.3" r="0.5" fill="#686868"/><circle cx="44.97" cy="14.3" r="0.7" fill="#7c7c7c"/><circle cx="75.04" cy="14.3" r="0.9" fill="#b4b4b4"/><circle cx="105.11" cy="14.3" r="1.2" fill="#ececec"/><circle cx="135.18" cy="14.3" r="1.5" fill="#f6f6f6"/><circle cx="165.25" cy="14.3" r="1.8" fill="#fff"/><circle cx="195.32" cy="14.3" r="2.4" fill="#fff"/><circle cx="225.39" cy="14.3" r="3.6" fill="#fff"/></svg>
<div class="a" style="left:1009px;top:487px;width:14px;height:43px;background:linear-gradient(to right,#2c2c2c,#424242)"></div>
<div class="a" style="left:1010px;top:495px;width:12px;height:11px;border-radius:4px;background:#666"></div>
<svg class="a" style="left:1009px;top:487px" width="14" height="43"><path d="M4 7h6l-3-4.5z" fill="#bbb"/><path d="M4 36h6l-3 5z" fill="#bbb"/></svg>
<div class="a" style="left:0;top:530px;width:1024px;height:14px;background:#222"></div>
</body></html>
